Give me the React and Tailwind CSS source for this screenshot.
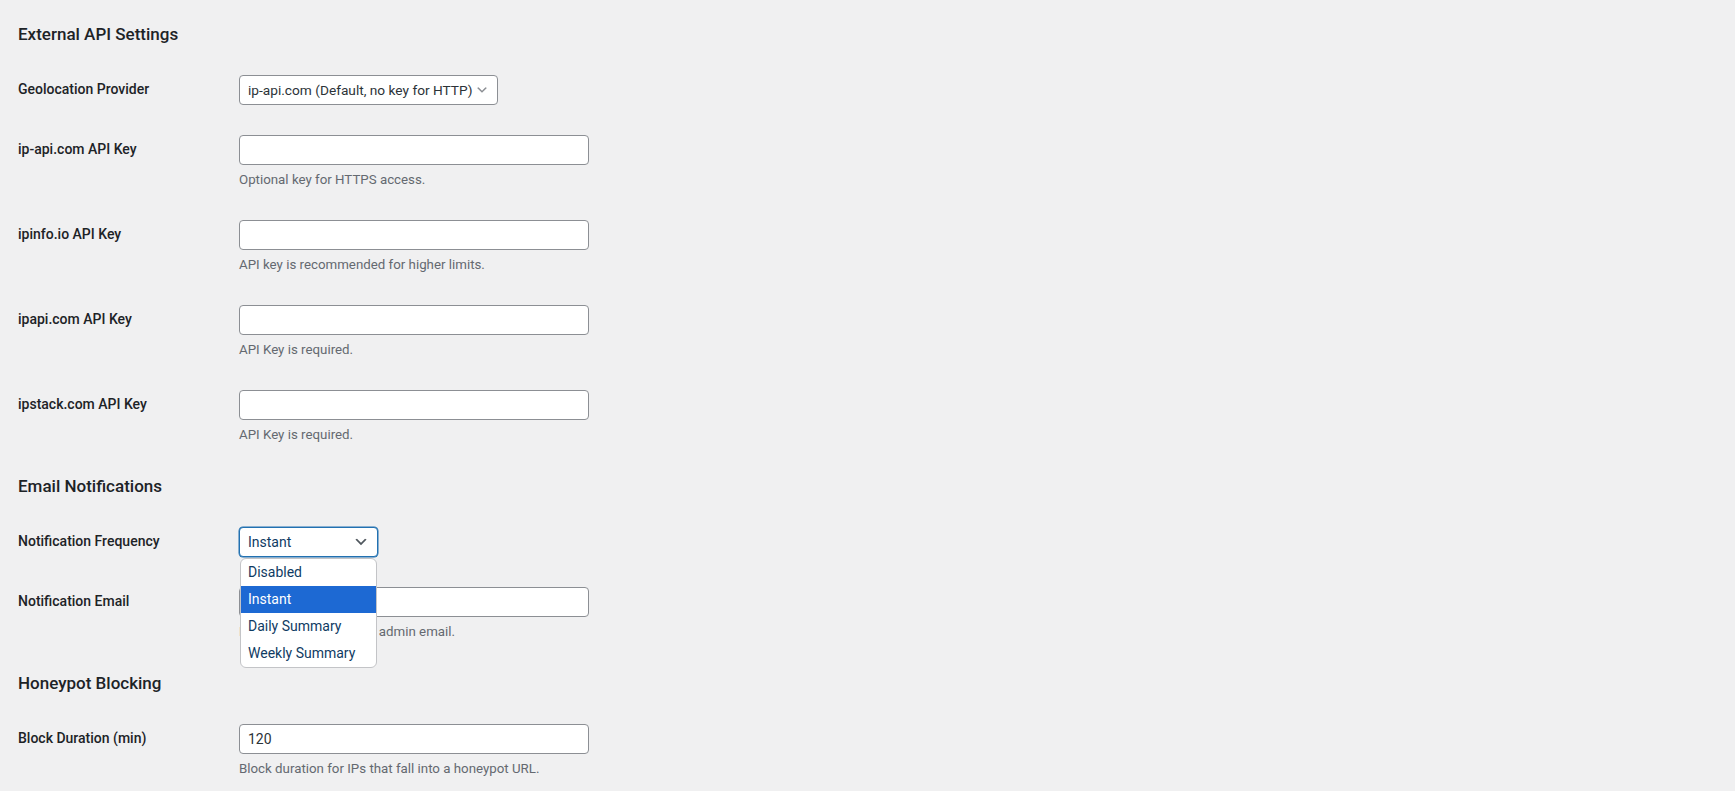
import { useState } from "react";

function Chevron({ className }) {
  return (
    <svg viewBox="0 0 20 20" className={className} aria-hidden="true">
      <path d="M5 6l5 5 5-5 2 1-7 7-7-7 2-1z" fill="currentColor" />
    </svg>
  );
}

function Heading({ children, first }) {
  return (
    <h2
      className={
        "h-[24px] leading-[24px] text-[17px] font-medium text-[#1d2327] mb-[14px] " +
        (first ? "" : "mt-[14px]")
      }
    >
      {children}
    </h2>
  );
}

function Row({ label, children, description }) {
  return (
    <div className="flex">
      <div className="w-[221px] shrink-0 pt-[20px] text-[14px] leading-[18px] font-medium text-[#1d2327]">
        {label}
      </div>
      <div className="flex flex-col py-[15px]">
        {children}
        {description && (
          <p className="mt-[4px] text-[13.3px] leading-[21px] text-[#646970]">{description}</p>
        )}
      </div>
    </div>
  );
}

function TextInput({ value = "" }) {
  const [v, setV] = useState(value);
  return (
    <input
      type="text"
      value={v}
      onChange={(e) => setV(e.target.value)}
      className="w-[350px] h-[30px] rounded-[4px] border border-[#8c8f94] bg-white px-[8px] text-[14px] text-[#2c3338] outline-none"
    />
  );
}

const frequencies = ["Disabled", "Instant", "Daily Summary", "Weekly Summary"];

export default function App() {
  const [freq, setFreq] = useState("Instant");

  return (
    <div className="min-h-screen bg-[#f0f0f1] pl-[18px] pt-[22px] font-['Roboto',_'Liberation_Sans',_sans-serif]">
      <Heading first>External API Settings</Heading>

      <Row label="Geolocation Provider">
        <div className="w-[259px] h-[30px] flex items-center justify-between rounded-[4px] border border-[#8c8f94] bg-white pl-[8px] pr-[8px] text-[13.7px] text-[#2c3338]">
          <span className="whitespace-nowrap">ip-api.com (Default, no key for HTTP)</span>
          <Chevron className="w-[14px] h-[14px] text-[#8c8f94] shrink-0" />
        </div>
      </Row>

      <Row label="ip-api.com API Key" description="Optional key for HTTPS access.">
        <TextInput />
      </Row>
      <Row label="ipinfo.io API Key" description="API key is recommended for higher limits.">
        <TextInput />
      </Row>
      <Row label="ipapi.com API Key" description="API Key is required.">
        <TextInput />
      </Row>
      <Row label="ipstack.com API Key" description="API Key is required.">
        <TextInput />
      </Row>

      <Heading>Email Notifications</Heading>

      <Row label="Notification Frequency">
        <div className="relative">
          <div className="w-[139px] h-[30px] flex items-center justify-between rounded-[4px] border border-[#2271b1] shadow-[0_0_0_0.5px_#2271b1] bg-white pl-[8px] pr-[8px] text-[14px] text-[#0f3b63]">
            <span>{freq}</span>
            <Chevron className="w-[16px] h-[16px] text-[#50575e]" />
          </div>
          <ul className="absolute left-[1px] top-[31px] z-10 w-[137px] overflow-hidden rounded-[6px] border border-[#c3c4c7] bg-white text-[14px]">
            {frequencies.map((f) => (
              <li
                key={f}
                onClick={() => setFreq(f)}
                className={
                  "h-[27px] leading-[27px] pl-[7px] cursor-default " +
                  (f === freq ? "bg-[#1d69d3] text-white" : "text-[#0f3b63]")
                }
              >
                {f}
              </li>
            ))}
          </ul>
        </div>
      </Row>

      <Row label="Notification Email" description="Leave empty to use the admin email.">
        <TextInput />
      </Row>

      <Heading>Honeypot Blocking</Heading>

      <Row label="Block Duration (min)" description="Block duration for IPs that fall into a honeypot URL.">
        <TextInput value="120" />
      </Row>
    </div>
  );
}
